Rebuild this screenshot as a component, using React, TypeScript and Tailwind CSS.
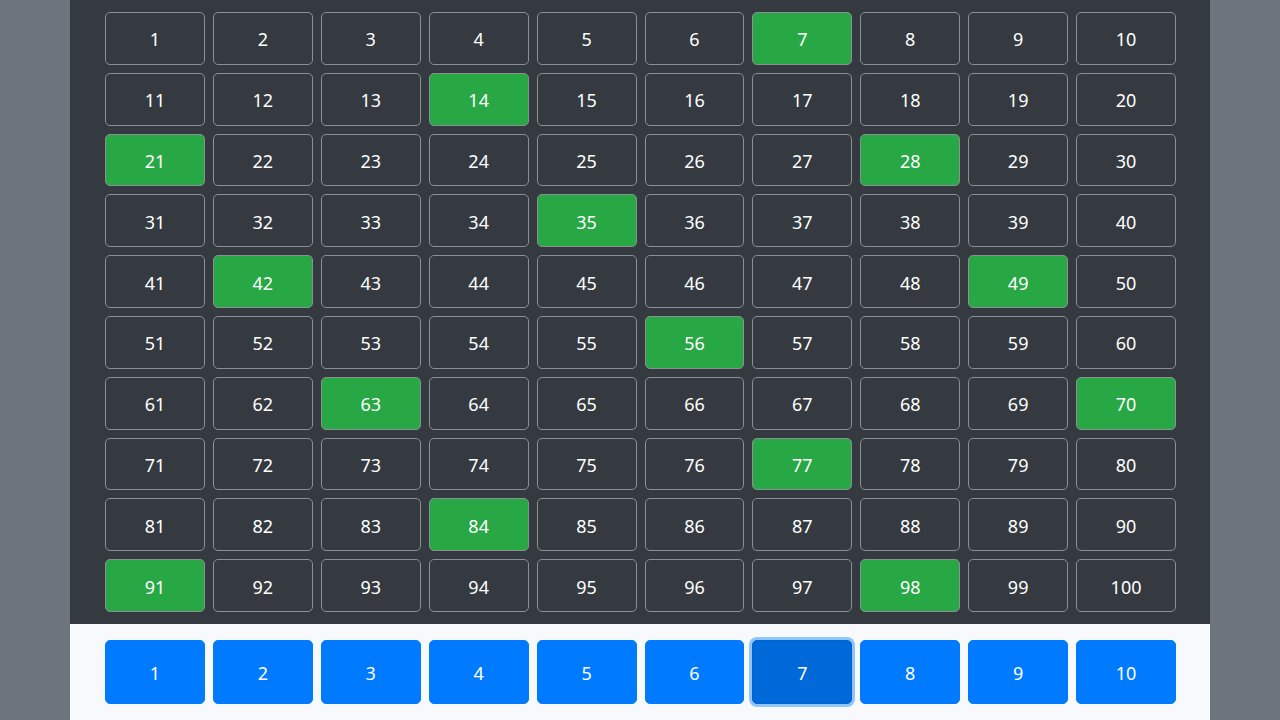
import React from "react";

const numbers = Array.from({ length: 100 }, (_, i) => i + 1);
const pages = Array.from({ length: 10 }, (_, i) => i + 1);

export default function App() {
  const selected = 7;

  return (
    <div
      className="min-h-[720px] h-[720px] overflow-hidden bg-[#6c757d]"
      style={{ fontFamily: '"Noto Sans", "Open Sans", sans-serif' }}
    >
      <div className="mx-auto w-[1140px]">
        {/* Number board */}
        <div className="bg-[#343a40] pl-[35px] pr-[34px] py-[12px]">
          <div className="grid grid-cols-10 gap-x-[8px] gap-y-[8px]">
            {numbers.map((n) => (
              <button
                key={n}
                className={`h-[52.8px] rounded-[5px] border border-[#8a9097] pt-[3px] text-[18px] text-white ${
                  n % selected === 0 ? "bg-[#28a745]" : "bg-transparent"
                }`}
              >
                {n}
              </button>
            ))}
          </div>
        </div>

        {/* Multiplier picker */}
        <div className="bg-[#f8f9fa] pl-[35px] pr-[34px] pt-[16px] pb-[20px]">
          <div className="grid grid-cols-10 gap-x-[8px]">
            {pages.map((p) => (
              <button
                key={p}
                className={`h-[64px] rounded-[5px] border pt-[3px] text-[18px] text-white ${
                  p === selected
                    ? "bg-[#0069d9] border-[#0062cc] shadow-[0_0_0_3px_rgba(38,143,255,0.5)]"
                    : "bg-[#007bff] border-[#007bff]"
                }`}
              >
                {p}
              </button>
            ))}
          </div>
        </div>
      </div>
    </div>
  );
}
